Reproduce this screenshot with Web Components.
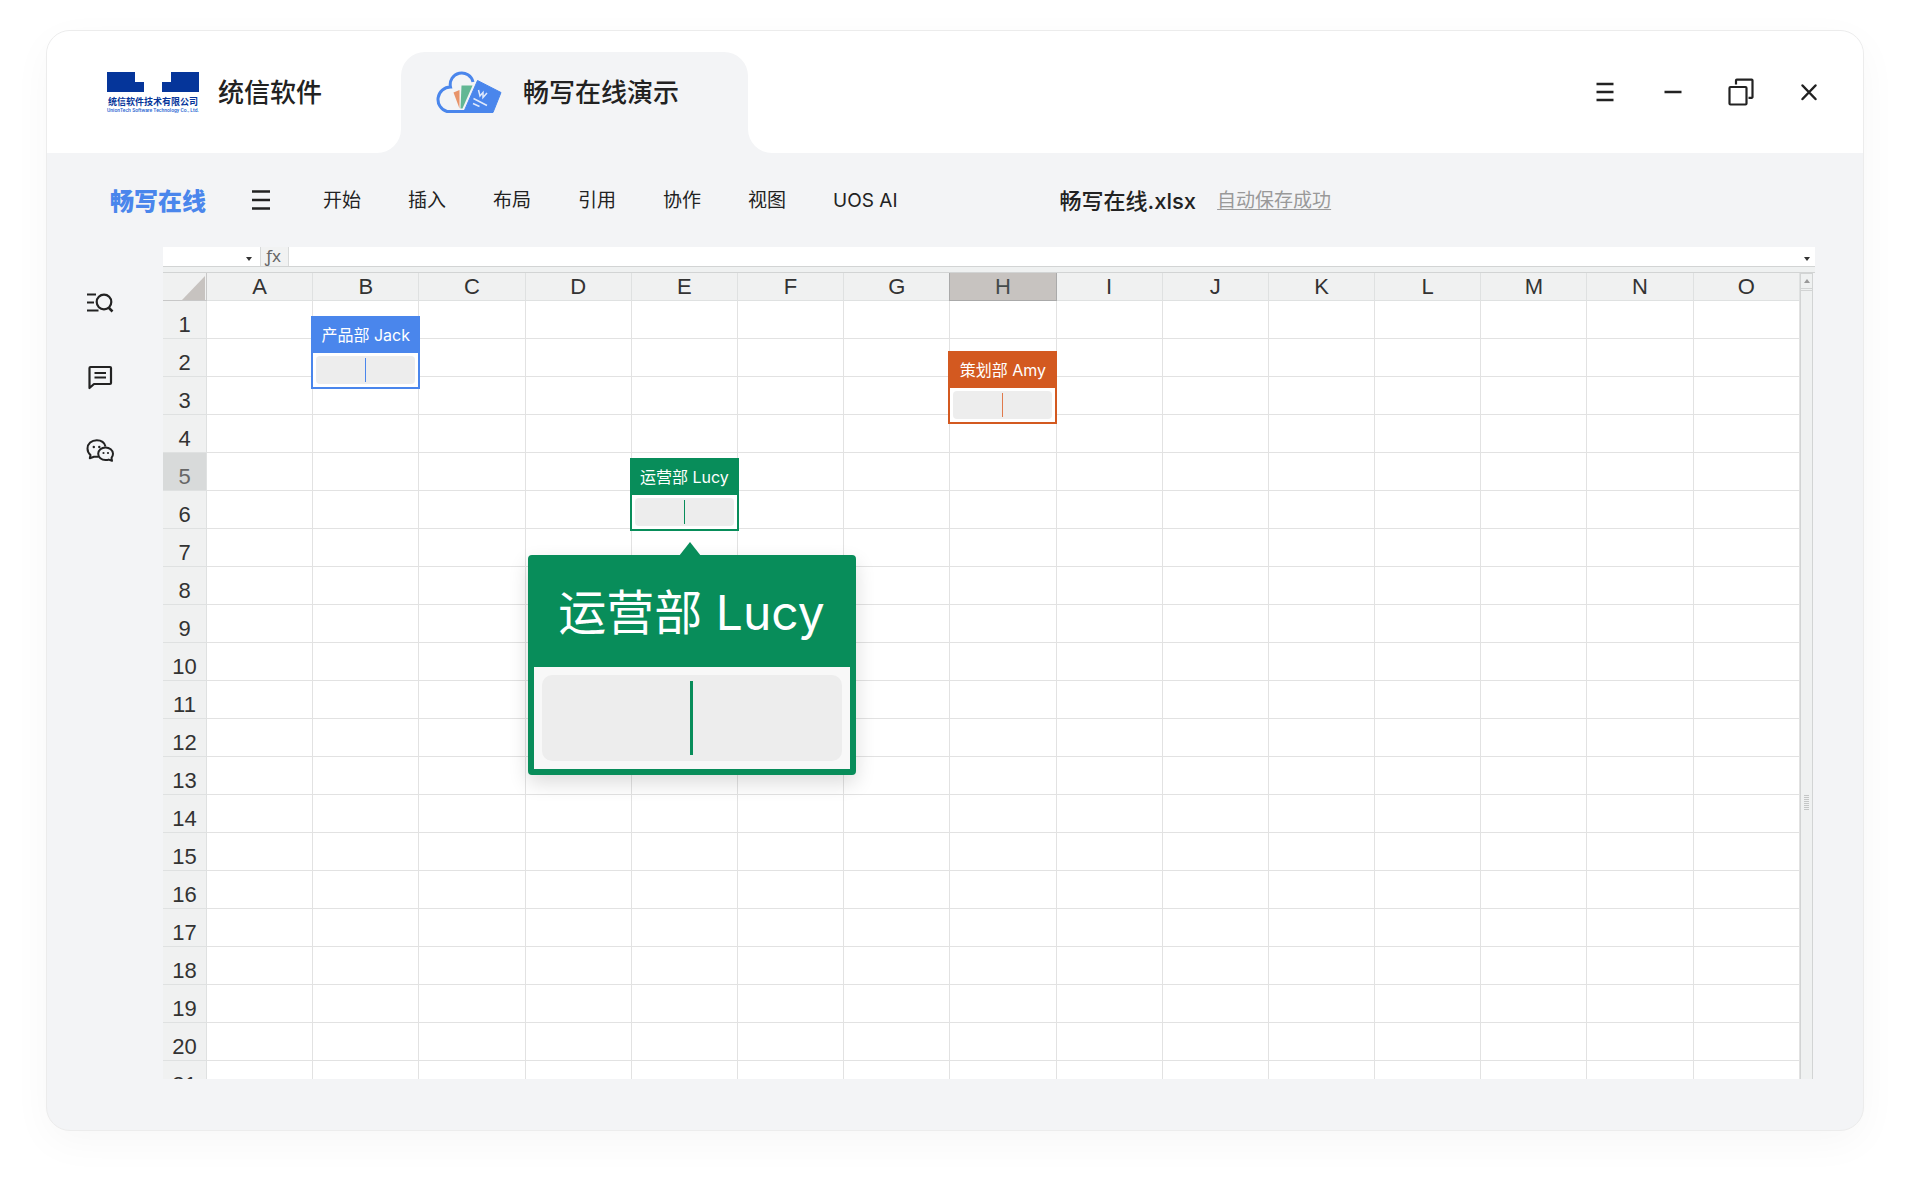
<!DOCTYPE html>
<html lang="zh-CN">
<head>
<meta charset="utf-8">
<meta name="viewport" content="width=device-width, initial-scale=1">
<title>畅写在线演示</title>
<style>
  html, body { height: 100%; }
  body { margin: 0; background: #fff; color: #222; font-family: Inter, "Noto Sans CJK SC", sans-serif; }
</style>
</head>
<body>
<app-window>
  <title-bar slot="title"></title-bar>
  <tool-bar slot="tools"></tool-bar>
  <side-rail slot="side"></side-rail>
  <sheet-view slot="sheet">
    <user-cursor style="--col:1; --top:43px; --tint:#4a86ec">产品部 Jack</user-cursor>
    <user-cursor style="--col:7; --top:78px; --tint:#d35920; --caret:#e07a4c">策划部 Amy</user-cursor>
    <user-cursor style="--col:4; --top:185px; --tint:#088d5a">运营部 Lucy</user-cursor>
    <user-cursor large style="--col:3; --top:282px; --tint:#088d5a">运营部 Lucy</user-cursor>
  </sheet-view>
</app-window>

<script>
const BASE = `
  :host, *, *::before, *::after { box-sizing: border-box; }
  button { font: inherit; color: inherit; background: none; border: 0; padding: 0; margin: 0; cursor: pointer; }
  svg { display: block; }
`;

function define(name, html, setup) {
  const tpl = document.createElement('template');
  tpl.innerHTML = html;
  customElements.define(name, class extends HTMLElement {
    constructor() {
      super();
      const root = this.attachShadow({ mode: 'open' });
      root.append(tpl.content.cloneNode(true));
      if (setup) setup(root);
    }
  });
}

define('app-window', `
<style>${BASE}
  :host { display: flex; height: 100vh; min-height: 600px; padding: 30px 56px 48px 46px; }
  .win { flex: 1; min-width: 0; display: flex; flex-direction: column; background: #f3f4f6; border: 1px solid #ececec;
         border-radius: 24px; overflow: hidden; box-shadow: 0 12px 40px rgba(0,0,0,.035); }
  .body { flex: 1; min-height: 0; display: flex; padding: 0 48px 51px 0; }
  ::slotted([slot=sheet]) { flex: 1; min-width: 0; }
</style>
<main class="win">
  <slot name="title"></slot>
  <slot name="tools"></slot>
  <div class="body"><slot name="side"></slot><slot name="sheet"></slot></div>
</main>`);

define('company-logo', `
<style>${BASE}
  :host { display: flex; flex-direction: column; align-items: center; width: 92px; color: #05359a; }
  .cn { font: 700 9px/10px "Noto Sans CJK SC", sans-serif; margin-top: 5px; white-space: nowrap; }
  .en { font: 500 5px/6px Roboto, "Liberation Sans", sans-serif; color: #1c5fd0; white-space: nowrap; }
</style>
<svg width="92" height="20" viewBox="0 0 92 20" fill="#05359a" aria-hidden="true">
  <path d="M0 0h28v10h9v10H0zM64 0h28v20H55V10h9z"/>
</svg>
<span class="cn">统信软件技术有限公司</span>
<span class="en">UnionTech Software Technology Co., Ltd.</span>`);

define('title-bar', `
<style>${BASE}
  :host { display: flex; height: 122px; flex: none; font-weight: 500; font-size: 26px; line-height: 38px; }
  .brand { width: 354px; display: flex; align-items: center; gap: 19px; padding-left: 60px; background: #fff; border-bottom-right-radius: 24px; }
  .label { padding-top: 2px; }
  .tabs { background: linear-gradient(#fff 60%, #f3f4f6 60%); padding-top: 21px; }
  .tab { width: 347px; height: 100%; display: flex; align-items: center; gap: 20px; padding: 0 0 21px 34px;
         background: #f3f4f6; border-radius: 24px 24px 0 0; white-space: nowrap; }
  .controls { flex: 1; display: flex; justify-content: flex-end; align-items: center; gap: 40px; padding-right: 40px;
              background: #fff; border-bottom-left-radius: 24px; }
  .controls button { width: 28px; height: 28px; }
</style>
<div class="brand"><company-logo></company-logo><span class="label">统信软件</span></div>
<div class="tabs" role="tablist">
  <button class="tab" role="tab" aria-selected="true">
    <svg width="68" height="43" viewBox="1 0 68 43" aria-hidden="true">
      <path d="M39 11A11.500 11.500 0 0 0 16.500 16A12.500 12.500 0 0 0 13 40.500H34" fill="none" stroke="#4a86ec" stroke-width="3"/>
      <path d="M19.500 21.500l6-2.500v18.500z" fill="#e8946a"/>
      <path d="M27.500 14.500H38.500L28.500 37.500H26.500z" fill="#62b794"/>
      <path d="M43.500 9.500L67 21.500L59 41.500H29.500z" fill="#4a86ec" stroke="#4a86ec" stroke-linejoin="round"/>
      <path d="M44.500 19l1.500 6 3-3.500 0 5 4-4.500M39.500 27.500l13.500 7M39 32.500l6.500 3" fill="none" stroke="#dfe9fc" stroke-width="1.500"/>
    </svg>
    <span class="label">畅写在线演示</span>
  </button>
</div>
<div class="controls">
  <button aria-label="菜单"><svg width="28" height="28" fill="none" stroke="#222" stroke-width="2.500"><path d="M5.500 6h17M5.500 14h17M5.500 22h17"/></svg></button>
  <button aria-label="最小化"><svg width="28" height="28" fill="none" stroke="#222" stroke-width="2.500"><path d="M5.500 14h17"/></svg></button>
  <button aria-label="还原"><svg width="28" height="28" fill="none" stroke="#222" stroke-width="2.200" stroke-linejoin="round"><rect x="2.500" y="9" width="17" height="17.500" rx="1"/><path d="M9 6.500V2.500a.800.800 0 0 1 .800-.800H24.700a.800.800 0 0 1 .800.800V19a.800.800 0 0 1-.800.800H21.500"/></svg></button>
  <button aria-label="关闭"><svg width="28" height="28" fill="none" stroke="#222" stroke-width="2.500" stroke-linecap="round"><path d="M7.500 7.500l13 13.500M20.500 7.500l-13 13.500"/></svg></button>
</div>`);

define('tool-bar', `
<style>${BASE}
  :host { display: flex; align-items: center; flex: none; height: 94px; padding: 0 48px 0 63px; font-size: 19px; line-height: 28px; white-space: nowrap; }
  .logo { font: 900 24px/36px "Noto Sans CJK SC", sans-serif; color: #4a86ec; }
  .menu { margin-left: 46px; width: 18px; }
  nav { display: flex; gap: 47px; margin-left: 53px; }
  nav, .doc, a { padding-top: 2px; }
  .doc { margin-left: 162px; font-size: 22px; font-weight: 500; }
  a { margin-left: 21px; color: #999; text-underline-offset: 2px; }
</style>
<span class="logo">畅写在线</span>
<button class="menu" aria-label="主菜单"><svg width="18" height="20" fill="none" stroke="#222" stroke-width="2.500"><path d="M0 1.500h18M0 10h18M0 18.500h18"/></svg></button>
<nav>
  <button>开始</button><button>插入</button><button>布局</button><button>引用</button><button>协作</button><button>视图</button><button>UOS AI</button>
</nav>
<span class="doc">畅写在线.xlsx</span>
<a href="#saved">自动保存成功</a>`);

define('side-rail', `
<style>${BASE}
  :host { display: flex; flex-direction: column; align-items: center; gap: 46px; width: 116px; padding: 42px 10px 0 0; flex: none; }
  svg { fill: none; stroke: #222; stroke-width: 2; stroke-linejoin: round; }
</style>
<button aria-label="查找"><svg width="28" height="28" viewBox="0 0 28 28"><path d="M1 5.500h9M1 13.500h7M1 21.500h11.500" stroke-width="2.200"/><circle cx="18" cy="13" r="7.300" stroke-width="2.200"/><path d="M22.500 18.500l4 4" stroke-width="2.500"/></svg></button>
<button aria-label="批注"><svg width="28" height="28" viewBox="0 0 28 28"><path d="M3.500 25V5a1 1 0 0 1 1-1H24a1 1 0 0 1 1 1V20a1 1 0 0 1-1 1H8z" stroke-width="2.200"/><path d="M8.500 10h11.500M8.500 14.500h11.500"/></svg></button>
<button aria-label="微信"><svg width="28" height="28" viewBox="0 0 28 28"><path d="M19.500 9.500C18.500 5.500 14.800 3.200 10.800 3.200C5.500 3.200 1.500 6.800 1.500 11.500c0 2.900 1.200 5 3 6.500L3.800 21.300l4.200-1.500h4.500"/><path d="M19.500 10.500c-4 0-7.300 2.800-7.300 6.300s3.300 6.300 7.300 6.300c1.200 0 2 0 3.200-.500l3.300 1.200-.500-3c1-1.200 1.500-2.500 1.500-4c0-3.500-3.500-6.300-7.500-6.300z"/><g fill="#222" stroke="none"><circle cx="7.800" cy="10" r="1.200"/><circle cx="13.300" cy="10" r="1.200"/><circle cx="17.500" cy="16" r="1.100"/><circle cx="22" cy="16" r="1.100"/></g></svg></button>`);

define('formula-bar', `
<style>${BASE}
  :host { display: flex; height: 20px; background: #fff; border-bottom: 1px solid #d2d4d4; }
  input { border: 0; outline: 0; background: none; padding: 0 4px; min-width: 0; font: 14px/18px "Liberation Sans", sans-serif; }
  .name { width: 78px; }
  .value { flex: 1; }
  button { width: 16px; padding: 5px 0 0 5px; }
  .drop { margin-right: 3px; }
  .fx { width: 29px; padding: 0 3px 2px 0; background: #f1f2f2; border: solid #d8dada; border-width: 0 1px; font: 17px/16px "Noto Sans", "Open Sans", sans-serif; color: #666; }
</style>
<input class="name" aria-label="名称框"><button class="drop" aria-label="选择名称"><svg width="6" height="4"><path d="M0 0h6L3 4z" fill="#333"/></svg></button>
<button class="fx" aria-label="插入函数">ƒx</button>
<input class="value" aria-label="编辑栏"><button aria-label="展开编辑栏"><svg width="6" height="4"><path d="M0 0h6L3 4z" fill="#333"/></svg></button>`);

define('sheet-view', `
<style>${BASE}
  :host { display: flex; flex-direction: column; min-height: 0; }
  .gap { height: 6px; flex: none; background: #eff1f1; border-bottom: 1px solid #d2d4d4; }
  .area { flex: 1; min-height: 0; display: flex; margin-right: 2px; }
  .grid { position: relative; flex: 1; min-width: 0; overflow: hidden; background: #fff; }
  table { width: 100%; height: calc(100% + 20px); table-layout: fixed; border-collapse: separate; border-spacing: 0; font: 22px/26px "Liberation Sans", Arial, sans-serif; color: #333; }
  th { font-weight: 400; padding: 0; background: #f0f1f1; border: solid #dfe1e1; border-width: 0 1px 1px 0; }
  td { padding: 0; border: solid #e2e2e2; border-width: 0 1px 1px 0; }
  thead th { height: 28px; }
  tbody th { height: 38px; padding-top: 11px; }
  col.num { width: 44px; }
  .corner { border-color: #c8c8c8; }
  .corner svg { margin-left: auto; }
  th.col-on { background: #c7c3c0; border-color: #aaa; box-shadow: -1px 0 #aaa; color: #444b4b; }
  th.row-on { background: #d8dada; color: #666; }
  .layer { position: absolute; inset: 0 0 0 44px; pointer-events: none; }
  .scroll { width: 13px; flex: none; display: flex; flex-direction: column; background: #eff1f1; border: solid #d2d4d4; border-width: 0 1px; }
  .up { height: 16px; display: flex; justify-content: center; align-items: center; border: 1px solid #d2d4d4; border-width: 1px 0; }
  .thumb { flex: 1; display: flex; align-items: center; justify-content: center; margin-top: 1px; padding-top: 234px; border-top: 1px solid #d2d4d4; }
</style>
<formula-bar></formula-bar>
<div class="gap"></div>
<div class="area">
  <div class="grid">
    <table>
      <colgroup><col class="num"></colgroup>
      <thead><tr><th class="corner"><svg width="24" height="26"><path d="M23 2V26H0z" fill="#c7c3c0"/></svg></th></tr></thead>
      <tbody></tbody>
    </table>
    <div class="layer"><slot></slot></div>
  </div>
  <div class="scroll">
    <button class="up" aria-label="向上滚动"><svg width="6" height="4"><path d="M0 4h6L3 0z" fill="#999"/></svg></button>
    <div class="thumb"><svg width="5" height="15" stroke="#c4c6c6"><path d="M0 .5h5M0 2.500h5M0 4.500h5M0 6.500h5M0 8.500h5M0 10.500h5M0 12.500h5M0 14.500h5"/></svg></div>
  </div>
</div>`, root => {
  const head = root.querySelector('thead tr');
  const body = root.querySelector('tbody');
  for (const c of 'ABCDEFGHIJKLMNO') {
    const th = document.createElement('th');
    th.scope = 'col';
    th.textContent = c;
    if (c === 'H') th.className = 'col-on';
    head.append(th);
  }
  for (let r = 1; r <= 21; r++) {
    const tr = body.insertRow();
    const th = document.createElement('th');
    th.scope = 'row';
    th.textContent = r;
    if (r === 5) th.className = 'row-on';
    tr.append(th);
    for (let i = 0; i < 15; i++) tr.insertCell();
  }
});

define('user-cursor', `
<style>${BASE}
  :host { position: absolute; left: calc(100% * var(--col) / 15 - 2px); top: var(--top); width: 109px; height: 73px;
          display: flex; flex-direction: column; background: #fff; border: 2px solid var(--tint); }
  .name { flex: none; height: 35px; background: var(--tint); color: #fff; text-align: center; font-size: 16px; line-height: 34px; white-space: nowrap; }
  .box { flex: 1; margin: 3px; border-radius: 4px; background: #ededed; display: flex; justify-content: center; padding: 2px 0; }
  .box::before { content: ""; width: 1px; background: var(--caret, var(--tint)); }
  :host([large]) { width: 328px; height: 220px; left: calc(100% * var(--col) / 15 + 2px); border-width: 6px; border-radius: 4px; background: #f8f8f8;
                   box-shadow: 0 8px 20px rgba(0,0,0,.14); }
  :host([large])::before { content: ""; position: absolute; left: 145px; top: -19px; border: solid transparent; border-width: 0 11px 14px; border-bottom-color: var(--tint); }
  :host([large]) .name { height: 106px; font-size: 48px; line-height: 104px; }
  :host([large]) .box { margin: 8px; border-radius: 10px; padding: 6px 0; }
  :host([large]) .box::before { width: 3px; }
</style>
<div class="name"><slot></slot></div>
<div class="box"></div>`);
</script>
</body>
</html>
